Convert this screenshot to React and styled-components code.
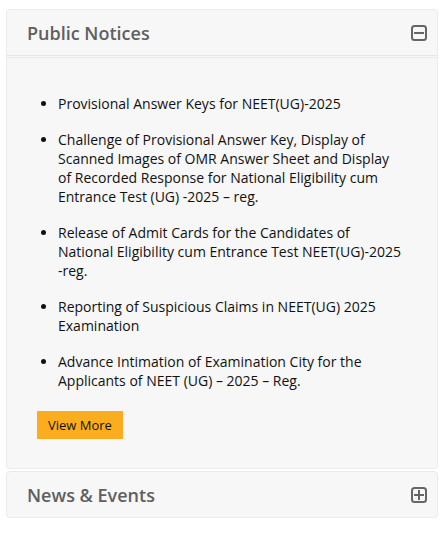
import React from "react"
import styled, { createGlobalStyle } from "styled-components"

const GlobalStyle = createGlobalStyle`
  body {
    margin: 0;
    background: #fff;
    font-family: "Open Sans", "Noto Sans", sans-serif;
  }
`

const notices = [
  "Provisional Answer Keys for NEET(UG)-2025",
  "Challenge of Provisional Answer Key, Display of Scanned Images of OMR Answer Sheet and Display of Recorded Response for National Eligibility cum Entrance Test (UG) -2025 \u2013 reg.",
  "Release of Admit Cards for the Candidates of National Eligibility cum Entrance Test NEET(UG)-2025 -reg.",
  "Reporting of Suspicious Claims in NEET(UG) 2025 Examination",
  "Advance Intimation of Examination City for the Applicants of NEET (UG) \u2013 2025 \u2013 Reg.",
]

const Page = styled.div`
  padding: 9px 7px 0 6px;
  display: flex;
  flex-direction: column;
  gap: 2px;
`

const Panel = styled.section`
  background: #f7f7f7;
  border: 1px solid #ebebeb;
  border-radius: 4px;
`

const Header = styled.div`
  height: 45px;
  display: flex;
  align-items: center;
  justify-content: space-between;
  padding: 0 10px 0 20px;
  border-bottom: ${p => (p.open ? "1px solid #e6e6e6" : "none")};
  margin-bottom: ${p => (p.open ? "1px" : "0")};
`

const Title = styled.h2`
  margin: 0;
  font-size: 18px;
  font-weight: 600;
  color: #5f5f5f;
`

const Body = styled.div`
  border-top: 1px solid #ebebeb;
  padding: 36px 35px 29px 30px;
`

const List = styled.ul`
  margin: 0;
  padding-left: 21px;
  color: #111;
  font-size: 14px;
  line-height: 19px;

  li + li {
    margin-top: 17px;
  }
`

const Button = styled.button`
  margin-top: 21px;
  border: none;
  background: #fbad1f;
  color: #111;
  font-family: inherit;
  font-size: 13px;
  padding: 0 11px;
  height: 28px;
`

const Toggle = ({ open }) => (
  <svg width="16" height="16" viewBox="0 0 16 16">
    <rect x="1" y="1" width="14" height="14" rx="2.5" fill="none" stroke="#666" strokeWidth="2" />
    <line x1="3" y1="8" x2="13" y2="8" stroke="#666" strokeWidth="2" />
    {!open && <line x1="8" y1="3" x2="8" y2="13" stroke="#666" strokeWidth="2" />}
  </svg>
)

export default function App() {
  return (
    <>
      <GlobalStyle />
      <Page>
        <Panel>
          <Header open>
            <Title>Public Notices</Title>
            <Toggle open />
          </Header>
          <Body>
            <List>
              {notices.map((n, i) => (
                <li key={i}>{n}</li>
              ))}
            </List>
            <Button>View More</Button>
          </Body>
        </Panel>
        <Panel>
          <Header>
            <Title>News &amp; Events</Title>
            <Toggle />
          </Header>
        </Panel>
      </Page>
    </>
  )
}
